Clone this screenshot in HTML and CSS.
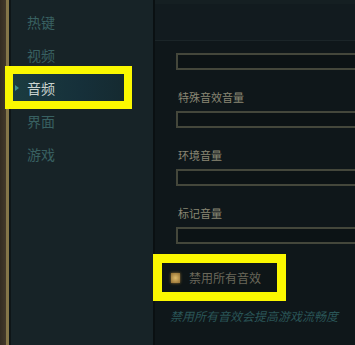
FILE: index.html
```html
<!DOCTYPE html>
<html lang="zh-CN">
<head>
    <meta charset="UTF-8">
    <meta name="viewport" content="width=device-width, initial-scale=1.0">
    <title>音频设置</title>
    <link rel="stylesheet" href="styles.css">
</head>
<body>
    <div class="frame"></div>
    <nav class="sidebar">
        <a href="#" class="nav-item">热键</a>
        <a href="#" class="nav-item">视频</a>
        <a href="#" class="nav-item active">音频</a>
        <a href="#" class="nav-item">界面</a>
        <a href="#" class="nav-item">游戏</a>
    </nav>
    <main class="panel">
        <div class="panel-top"></div>
        <div class="panel-body">
            <div class="slider"></div>

            <div class="group">
                <label class="label">特殊音效音量</label>
                <div class="slider"></div>
            </div>
            <div class="group">
                <label class="label">环境音量</label>
                <div class="slider"></div>
            </div>
            <div class="group">
                <label class="label">标记音量</label>
                <div class="slider"></div>
            </div>

            <div class="check-row">
                <span class="checkbox"></span>
                <span class="check-text">禁用所有音效</span>
            </div>
            <p class="note">禁用所有音效会提高游戏流畅度</p>
        </div>
    </main>
</body>
</html>
```

FILE: styles.css
```css
/* Page and frame */
body {
    margin: 0;
    width: 355px;
    height: 345px;
    overflow: hidden;
    display: flex;
    background: #172327;
    font-family: "Noto Sans CJK SC", "Noto Sans", sans-serif;
}
.frame {
    width: 11px;
    flex-shrink: 0;
    background: linear-gradient(to right, #342c22 0, #43392a 6px, #857649 6px, #857649 9px, #0e1517 9px);
}

/* Left menu */
.sidebar {
    width: 142px;
    flex-shrink: 0;
    display: flex;
    flex-direction: column;
    gap: 6px;
    padding-top: 8px;
    background: #172327;
}
.nav-item {
    display: flex;
    align-items: center;
    height: 27px;
    width: 97px;
    margin-left: 2px;
    padding-left: 14px;
    color: #386061;
    font-size: 14px;
    text-decoration: none;
}
.nav-item.active {
    position: relative;
    color: #c9d3cf;
    background: linear-gradient(to right, #1b3c40, #16303a 60%, #152a30);
    outline: 8px solid #fbf800;
}
.nav-item.active::before {
    content: "";
    position: absolute;
    left: 2px;
    top: 11px;
    border-left: 4px solid #3d8e8e;
    border-top: 3px solid transparent;
    border-bottom: 3px solid transparent;
}

/* Right panel */
.panel {
    flex: 1;
    background: #0f171a;
    border-left: 2px solid #0a1012;
}
.panel-top {
    height: 36px;
    border-top: 4px solid #151f22;
    border-bottom: 1px solid #1b2528;
    background: #121b1f;
}
.panel-body {
    padding: 12px 0 0 21px;
}
.slider {
    height: 13px;
    border: 2px solid #44473b;
    border-right: none;
    background: #0c1315;
}
.group {
    margin-top: 20px;
}
.label {
    display: block;
    height: 14px;
    line-height: 14px;
    margin-bottom: 7px;
    padding-left: 2px;
    color: #8a8774;
    font-size: 11px;
}

/* Disable all sound */
.check-row {
    display: flex;
    align-items: center;
    width: 115px;
    height: 29px;
    margin: 19px 0 0 -14px;
    background: #0e1517;
    outline: 9px solid #fbf800;
}
.checkbox {
    width: 9px;
    height: 10px;
    margin: 0 9px 0 9px;
    background: radial-gradient(circle, #e0bb6a, #8f6c31);
    box-shadow: 0 0 3px #9c7734;
}
.check-text {
    color: #6a685a;
    font-size: 12px;
}
.note {
    margin: 15px 0 0 -6px;
    color: #2a5557;
    font-size: 12px;
    font-style: italic;
    white-space: nowrap;
}
```
